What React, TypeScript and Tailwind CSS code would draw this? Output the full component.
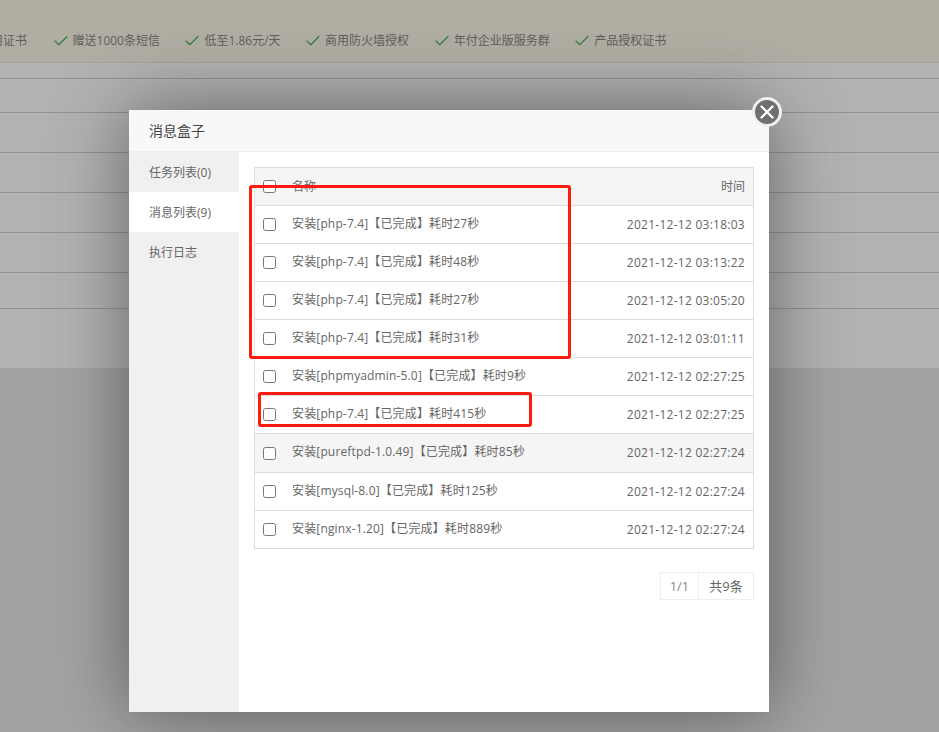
import React from "react";
import { X, Check } from "lucide-react";

const perks = ["赠送1000条短信", "低至1.86元/天", "商用防火墙授权", "年付企业版服务群", "产品授权证书"];
const rows: [string, string, boolean?][] = [
  ["安装[php-7.4]【已完成】耗时27秒", "2021-12-12 03:18:03"],
  ["安装[php-7.4]【已完成】耗时48秒", "2021-12-12 03:13:22"],
  ["安装[php-7.4]【已完成】耗时27秒", "2021-12-12 03:05:20"],
  ["安装[php-7.4]【已完成】耗时31秒", "2021-12-12 03:01:11"],
  ["安装[phpmyadmin-5.0]【已完成】耗时9秒", "2021-12-12 02:27:25"],
  ["安装[php-7.4]【已完成】耗时415秒", "2021-12-12 02:27:25"],
  ["安装[pureftpd-1.0.49]【已完成】耗时85秒", "2021-12-12 02:27:24", true],
  ["安装[mysql-8.0]【已完成】耗时125秒", "2021-12-12 02:27:24"],
  ["安装[nginx-1.20]【已完成】耗时889秒", "2021-12-12 02:27:24"],
];

export default function App() {
  return (
    <div className="relative w-[939px] h-[732px] overflow-hidden bg-[#a3a3a3] font-['Open_Sans','Noto_Sans_CJK_SC',sans-serif] text-[12px] text-[#666]">
      <div className="h-[63px] bg-[#b0ada3] border-b border-[#a8a59a] flex items-start pt-[31px] -ml-[9px] text-[12px] leading-[20px] text-[#5f5f59]">
        <span className="whitespace-nowrap mr-[4px]">用证书</span>
        {perks.map((p) => (
          <div key={p} className="flex items-center ml-[20.5px] mr-[3px]">
            <Check className="w-[18px] h-[18px] text-[#2e7d3a] mr-[3px]" strokeWidth={1.5} />
            <span className="whitespace-nowrap">{p}</span>
          </div>
        ))}
      </div>
      <div className="h-[305px] bg-[#b2b2b2] flex flex-col">
        {["h-[16px]", "h-[34px]", "h-[40px]", "h-[40px]", "h-[40px]", "h-[40px]", "h-[36px]"].map((h, i) => (
          <div key={i} className={`border-b border-[#929292] ${h}`} />
        ))}
      </div>

      <div className="absolute left-[129px] top-[110px] w-[640px] h-[602px] bg-white shadow-[0_0_70px_rgba(0,0,0,0.45)] flex flex-col">
        <div className="h-[42px] shrink-0 bg-[#f8f8f8] border-b border-[#eeeeee] pl-[20px] flex items-center text-[14px] text-[#444]">消息盒子</div>
        <div className="flex flex-1 min-h-0">
          <div className="w-[110px] bg-[#f0f0f0] flex flex-col shrink-0">
            <div className="h-[40px] pl-[20px] pt-[2px] flex items-center">任务列表(0)</div>
            <div className="h-[40px] pl-[20px] pt-[2px] flex items-center bg-white">消息列表(9)</div>
            <div className="h-[40px] pl-[20px] pt-[2px] flex items-center">执行日志</div>
          </div>
          <div className="flex-1 px-[15px] pt-[15px]">
            <div className="border border-[#dddddd]">
              <div className="h-[37px] bg-[#f5f5f5] flex items-center px-[8px]">
                <input type="checkbox" className="m-0 w-[13px] h-[13px]" />
                <span className="ml-[16px]">名称</span>
                <span className="ml-auto">时间</span>
              </div>
              {rows.map(([t, d, hover]) => (
                <div key={t} className={`border-t border-[#dddddd] flex items-center px-[8px] ${hover ? "h-[39px] bg-[#f5f5f5]" : "h-[38px] bg-white"}`}>
                  <input type="checkbox" className="m-0 w-[13px] h-[13px]" />
                  <span className="ml-[16px] mb-[2px] whitespace-nowrap tracking-[0.15px]">{t}</span>
                  <span className="ml-auto whitespace-nowrap tracking-[0.26px]">{d}</span>
                </div>
              ))}
            </div>
            <div className="flex justify-end mt-[23px]">
              <div className="h-[28px] flex border border-[#eeeeee] text-[13px]">
                <span className="w-[38px] pt-[1px] flex items-center justify-center text-[#888] border-r border-[#eeeeee]">1/1</span>
                <span className="w-[54px] pt-[1px] flex items-center justify-center">共9条</span>
              </div>
            </div>
          </div>
        </div>
      </div>

      <div className="absolute left-[752px] top-[97px] w-[30px] h-[30px] rounded-full bg-[#707070] border-[3px] border-[#f0f0f0] flex items-center justify-center">
        <X className="w-[22px] h-[22px] shrink-0 text-white" strokeWidth={2.5} />
      </div>
      <div className="absolute left-[249px] top-[185px] w-[322px] h-[174px] border-[3px] border-[#ff1a0f] rounded-[3px]" />
      <div className="absolute left-[258px] top-[392px] w-[274px] h-[35px] border-[3px] border-[#ff1a0f] rounded-[3px]" />
    </div>
  );
}
